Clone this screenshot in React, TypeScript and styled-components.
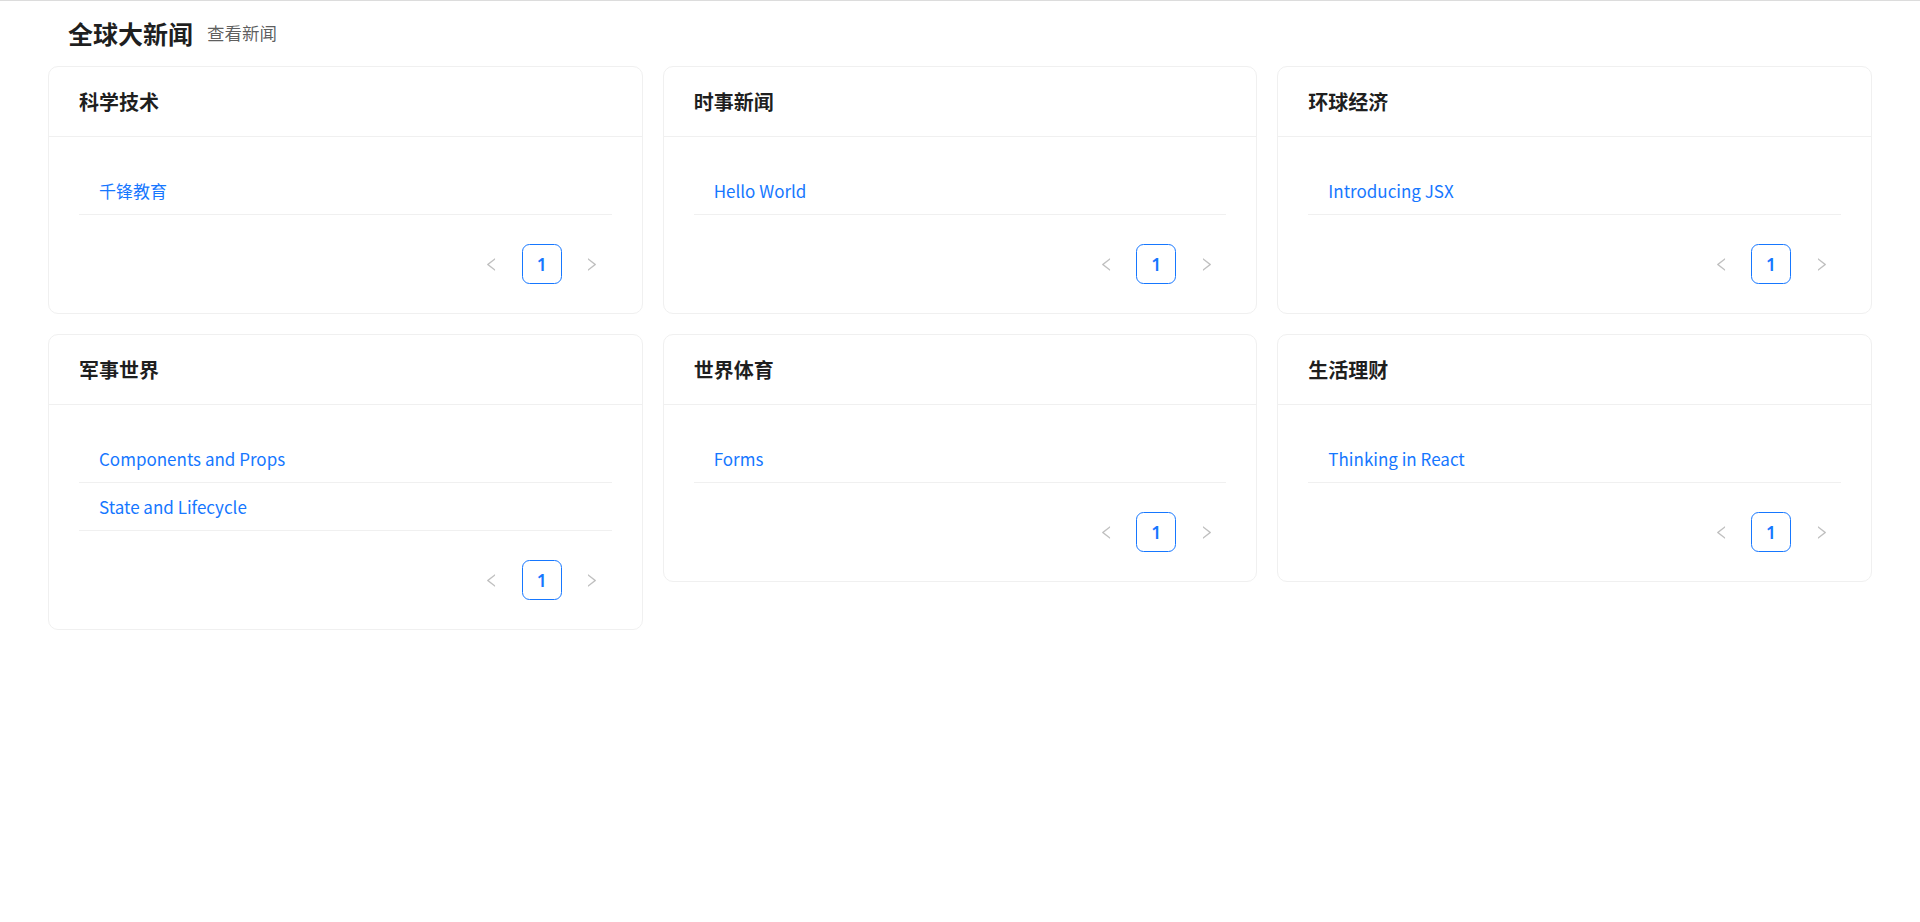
import styled, { createGlobalStyle } from "styled-components";

const GlobalStyle = createGlobalStyle`
  html, body {
    margin: 0;
    padding: 0;
    background: #fff;
  }
  body {
    font-family: "Noto Sans CJK SC", "Noto Sans", sans-serif;
    color: rgba(0, 0, 0, 0.88);
    border-top: 1px solid #dcdcdc;
  }
`;

const Page = styled.div`
  padding: 0 48px;
`;

const Header = styled.div`
  display: flex;
  align-items: center;
  padding: 12px 20px 13px;
`;

const HeaderTitle = styled.span`
  font-size: 25px;
  line-height: 40px;
  font-weight: 700;
  color: rgba(0, 0, 0, 0.88);
`;

const HeaderSub = styled.span`
  margin-left: 14px;
  font-size: 17.5px;
  line-height: 28px;
  color: rgba(0, 0, 0, 0.65);
`;

const CardGrid = styled.div`
  display: grid;
  grid-template-columns: repeat(3, 1fr);
  gap: 20px;
  align-items: start;
`;

const Card = styled.div`
  border: 1px solid #f0f0f0;
  border-radius: 10px;
  background: #fff;
`;

const CardHead = styled.div`
  height: 69px;
  padding: 0 30px;
  display: flex;
  align-items: center;
  border-bottom: 1px solid #f0f0f0;
  font-size: 20px;
  font-weight: 600;
`;

const CardBody = styled.div`
  padding: 30px 30px 29px;
`;

const List = styled.ul`
  list-style: none;
  margin: 0;
  padding: 0;
`;

const Item = styled.li`
  padding: 10px 20px;
  border-bottom: 1px solid #f0f0f0;
  font-size: 17px;
  line-height: 27px;
`;

const Link = styled.a`
  color: #1677ff;
  text-decoration: none;
  cursor: pointer;
`;

const Pager = styled.div`
  display: flex;
  justify-content: flex-end;
  gap: 10px;
  margin-top: 29px;
`;

const PageButton = styled.button<{ $active?: boolean }>`
  min-width: 40px;
  height: 40px;
  padding: 0;
  display: flex;
  align-items: center;
  justify-content: center;
  border: 1px solid ${(p) => (p.$active ? "#1677ff" : "transparent")};
  border-radius: 7.5px;
  background: #fff;
  color: ${(p) => (p.$active ? "#1677ff" : "rgba(0, 0, 0, 0.25)")};
  font-family: "Noto Sans", sans-serif;
  font-size: 17.5px;
  font-weight: 600;
  cursor: ${(p) => (p.$active ? "pointer" : "not-allowed")};
`;

const Left = () => (
  <svg viewBox="64 64 896 896" width="15" height="15" fill="currentColor">
    <path d="M724 218.3V141c0-6.7-7.700-10.400-12.900-6.300L260.3 486.8a31.86 31.86 0 000 50.3l450.8 352.1c5.3 4.1 12.9.4 12.9-6.3v-77.3c0-4.9-2.3-9.6-6.1-12.6l-360-281 360-281.1c3.8-3 6.1-7.7 6.1-12.6z" />
  </svg>
);

const Right = () => (
  <svg viewBox="64 64 896 896" width="15" height="15" fill="currentColor">
    <path d="M765.7 486.8L314.9 134.7A7.970 7.970 0 00302 141v77.3c0 4.9 2.3 9.6 6.1 12.6l360 281.1-360 281.1c-3.9 3-6.1 7.7-6.1 12.6V883c0 6.7 7.7 10.4 12.9 6.3l450.8-352.1a31.96 31.96 0 000-50.4z" />
  </svg>
);

const sections = [
  { title: "科学技术", items: ["千锋教育"] },
  { title: "时事新闻", items: ["Hello World"] },
  { title: "环球经济", items: ["Introducing JSX"] },
  { title: "军事世界", items: ["Components and Props", "State and Lifecycle"] },
  { title: "世界体育", items: ["Forms"] },
  { title: "生活理财", items: ["Thinking in React"] },
];

export default function App() {
  return (
    <Page>
      <GlobalStyle />
      <Header>
        <HeaderTitle>全球大新闻</HeaderTitle>
        <HeaderSub>查看新闻</HeaderSub>
      </Header>
      <CardGrid>
        {sections.map((s) => (
          <Card key={s.title}>
            <CardHead>{s.title}</CardHead>
            <CardBody>
              <List>
                {s.items.map((it) => (
                  <Item key={it}>
                    <Link>{it}</Link>
                  </Item>
                ))}
              </List>
              <Pager>
                <PageButton disabled>
                  <Left />
                </PageButton>
                <PageButton $active>1</PageButton>
                <PageButton disabled>
                  <Right />
                </PageButton>
              </Pager>
            </CardBody>
          </Card>
        ))}
      </CardGrid>
    </Page>
  );
}
